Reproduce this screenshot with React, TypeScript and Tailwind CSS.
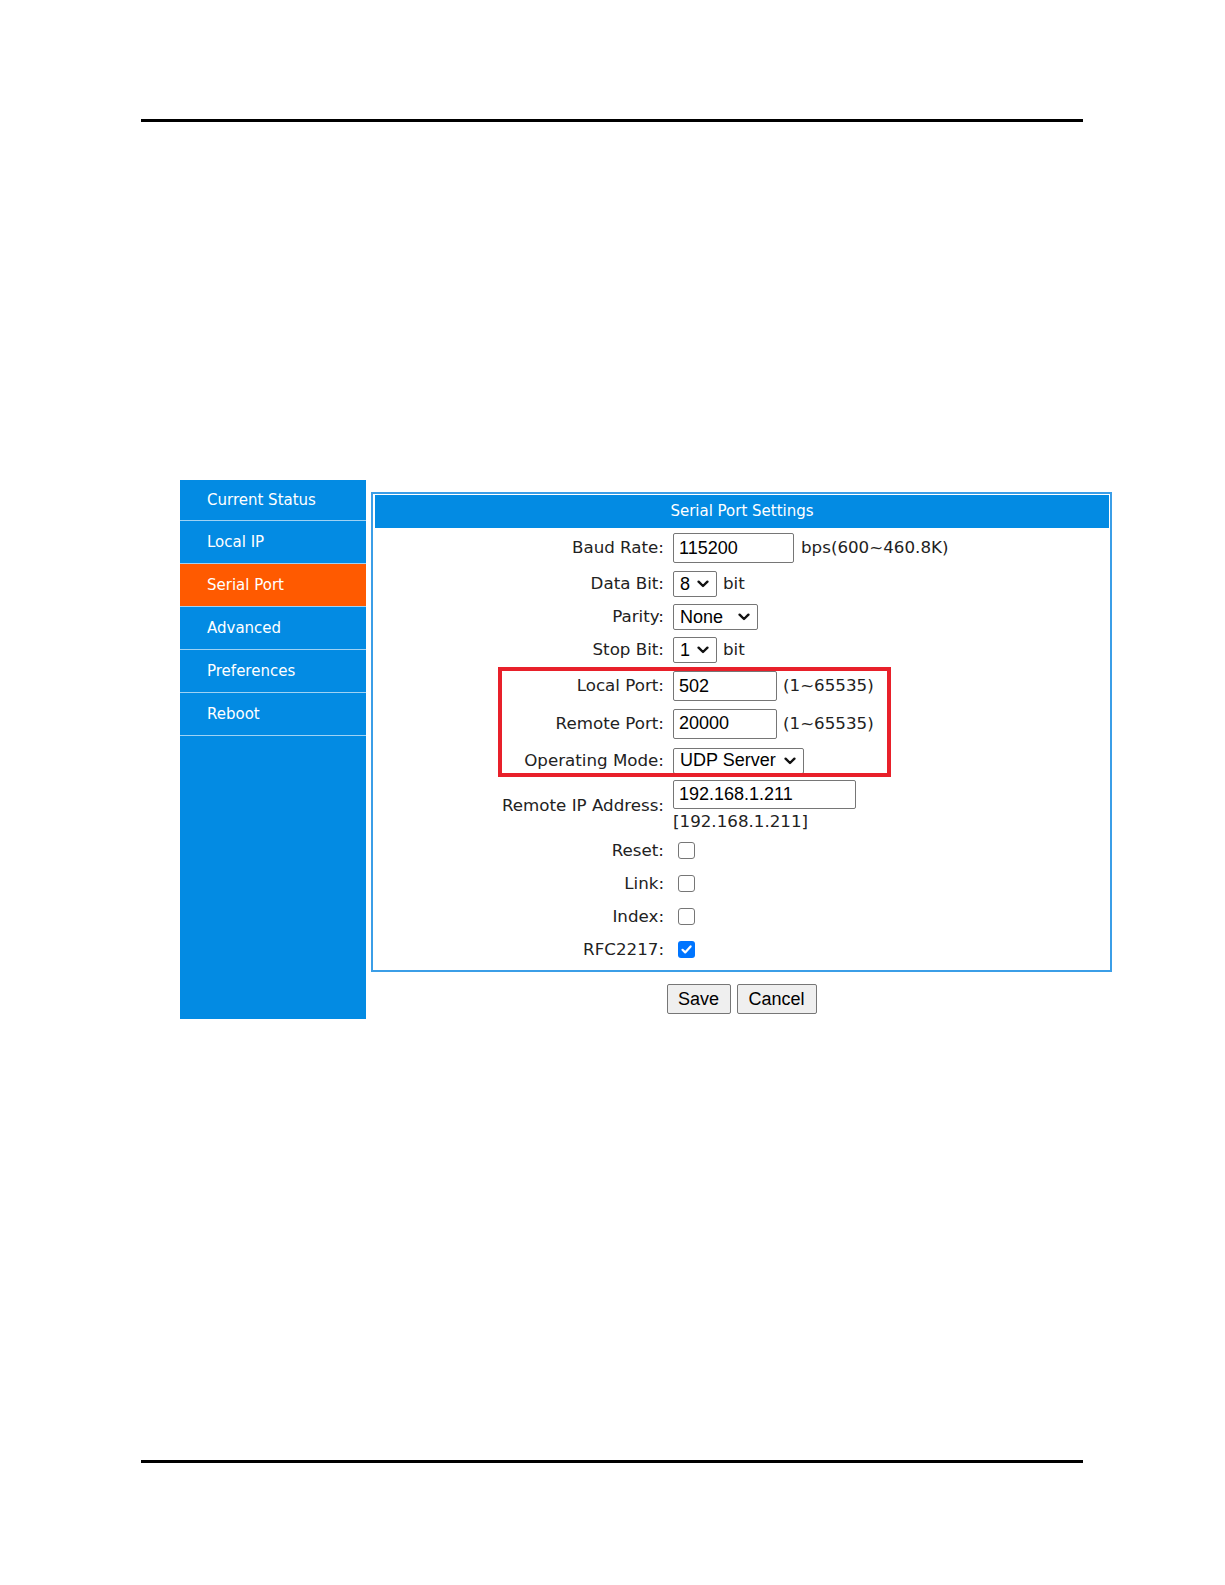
import React from 'react'

const navItems = ['Current Status', 'Local IP', 'Serial Port', 'Advanced', 'Preferences', 'Reboot']

function Chevron() {
  return (
    <svg width="12" height="8" viewBox="0 0 12 8" className="shrink-0">
      <path d="M1.6 1.7 L6 6 L10.4 1.7" fill="none" stroke="#111" strokeWidth="2.4" strokeLinecap="round" strokeLinejoin="round" />
    </svg>
  )
}

function TextBox({ value, width, height = 'h-[30px]' }: { value: string; width: string; height?: string }) {
  return (
    <input
      readOnly
      value={value}
      className={`${width} ${height} shrink-0 border border-[#767676] rounded-[2px] px-[5px] text-[18px] text-black bg-white outline-none font-['Liberation_Sans',Arial,sans-serif]`}
    />
  )
}

function SelectBox({ value, width }: { value: string; width: string }) {
  return (
    <div
      className={`${width} h-[26px] shrink-0 border border-[#767676] rounded-[2px] bg-white flex items-center justify-between pl-[6px] pr-[7px] text-[18px] text-black font-['Liberation_Sans',Arial,sans-serif]`}
    >
      <span>{value}</span>
      <Chevron />
    </div>
  )
}

function CheckBox({ checked = false }: { checked?: boolean }) {
  if (checked) {
    return (
      <div className="ml-[5px] w-[17px] h-[17px] rounded-[3px] bg-[#0075ff] flex items-center justify-center">
        <svg width="13" height="13" viewBox="0 0 13 13">
          <path d="M2.5 6.8 L5.2 9.4 L10.6 3.4" fill="none" stroke="#fff" strokeWidth="2.2" strokeLinecap="round" strokeLinejoin="round" />
        </svg>
      </div>
    )
  }
  return <div className="ml-[5px] w-[17px] h-[17px] rounded-[3px] border border-[#767676] bg-white" />
}

function Row({ label, height, children }: { label: string; height: string; children: React.ReactNode }) {
  return (
    <div className={`flex items-center ${height}`}>
      <div className="w-[289px] shrink-0 text-right text-[16.7px] text-[#222]">{label}</div>
      <div className="ml-[9px] flex items-center">{children}</div>
    </div>
  )
}

export default function App() {
  return (
    <div className="w-[1225px] min-h-[1585px] bg-white font-['DejaVu_Sans',Verdana,sans-serif]">
      <div className="pt-[119px]">
        <div className="ml-[141px] w-[942px] h-[3px] bg-black" />

        <div className="mt-[358px] ml-[180px] flex items-start">
          {/* Sidebar */}
          <div className="w-[186px] h-[539px] shrink-0 bg-[#038be3]">
            {navItems.map((item, i) => (
              <div
                key={item}
                className={`${i === 0 ? 'h-[41px]' : 'h-[43px]'} border-b border-[#9fd2f4] flex items-center pl-[27px] text-[15px] text-white ${
                  item === 'Serial Port' ? 'bg-[#ff5a00]' : ''
                }`}
              >
                {item}
              </div>
            ))}
          </div>

          {/* Main content */}
          <div className="ml-[5px] mt-[12px] w-[741px] shrink-0">
            <div className="relative border-2 border-[#3b9ee7] pt-px pl-[2px] pr-px pb-[4px]">
              <div className="h-[33px] bg-[#038be3] flex items-center justify-center text-[15px] text-white">
                Serial Port Settings
              </div>

              <div className="mt-[2px]">
                <Row label="Baud Rate:" height="h-[36px]">
                  <TextBox value="115200" width="w-[121px]" />
                  <span className="ml-[7px] text-[16.7px] text-[#222]">bps(600~460.8K)</span>
                </Row>
                <Row label="Data Bit:" height="h-[36px]">
                  <SelectBox value="8" width="w-[44px]" />
                  <span className="ml-[6px] text-[16.7px] text-[#222]">bit</span>
                </Row>
                <Row label="Parity:" height="h-[30px]">
                  <SelectBox value="None" width="w-[85px]" />
                </Row>
                <Row label="Stop Bit:" height="h-[36px]">
                  <SelectBox value="1" width="w-[44px]" />
                  <span className="ml-[6px] text-[16.7px] text-[#222]">bit</span>
                </Row>
                <Row label="Local Port:" height="h-[36px]">
                  <TextBox value="502" width="w-[104px]" />
                  <span className="ml-[6px] text-[16.7px] text-[#222]">(1~65535)</span>
                </Row>
                <Row label="Remote Port:" height="h-[39px]">
                  <TextBox value="20000" width="w-[104px]" />
                  <span className="ml-[6px] text-[16.7px] text-[#222]">(1~65535)</span>
                </Row>
                <Row label="Operating Mode:" height="h-[35px]">
                  <SelectBox value="UDP Server" width="w-[131px]" />
                </Row>
                <div className="flex items-center h-[56px]">
                  <div className="w-[289px] shrink-0 text-right text-[16.7px] text-[#222]">Remote IP Address:</div>
                  <div className="ml-[9px] flex flex-col">
                    <TextBox value="192.168.1.211" width="w-[183px]" height="h-[29px]" />
                    <span className="mt-[1px] text-[16.7px] leading-[22px] text-[#222]">[192.168.1.211]</span>
                  </div>
                </div>
                <Row label="Reset:" height="h-[33px]">
                  <CheckBox />
                </Row>
                <Row label="Link:" height="h-[33px]">
                  <CheckBox />
                </Row>
                <Row label="Index:" height="h-[33px]">
                  <CheckBox />
                </Row>
                <Row label="RFC2217:" height="h-[33px]">
                  <CheckBox checked />
                </Row>
              </div>

              {/* highlight annotation */}
              <div className="absolute left-[125px] top-[173px] w-[393px] h-[110px] border-4 border-[#e8202a] pointer-events-none" />
            </div>

            <div className="mt-[12px] flex justify-center gap-[6px] font-['Liberation_Sans',Arial,sans-serif] text-[18px] text-black">
              <button className="w-[64px] h-[30px] bg-[#efefef] border border-[#767676] rounded-[2px]">Save</button>
              <button className="w-[80px] h-[30px] bg-[#efefef] border border-[#767676] rounded-[2px]">Cancel</button>
            </div>
          </div>
        </div>

        <div className="mt-[441px] ml-[141px] w-[942px] h-[3px] bg-black" />
      </div>
    </div>
  )
}
